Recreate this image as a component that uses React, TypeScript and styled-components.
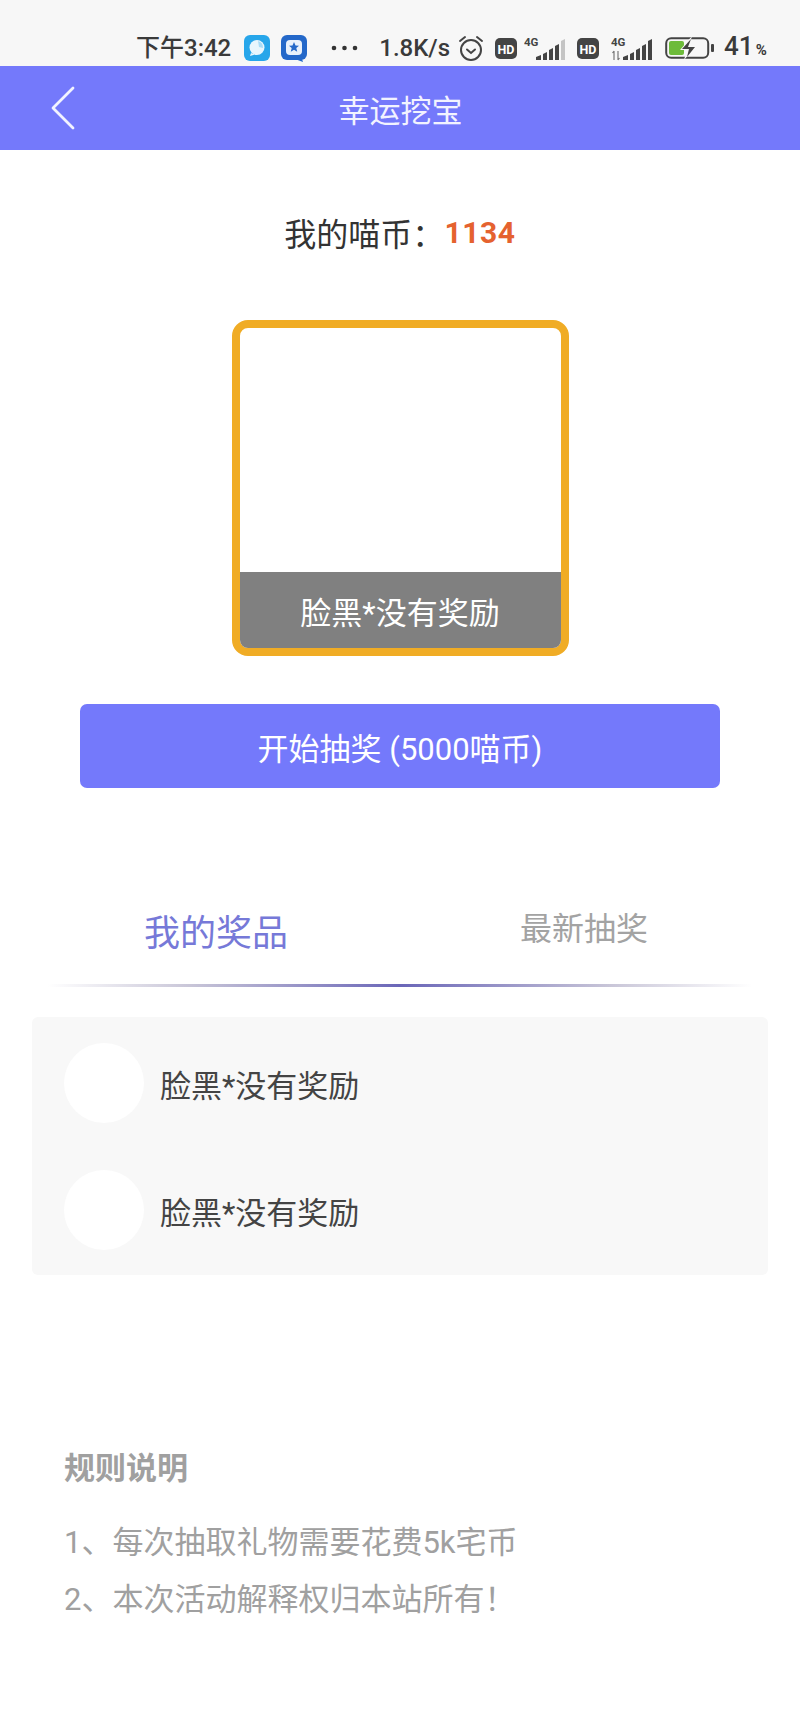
import * as React from 'react'
import styled, { createGlobalStyle } from 'styled-components'

const primary = '#7479fb'

const GlobalStyle = createGlobalStyle`
  html, body {
    margin: 0;
    padding: 0;
    background: #fff;
  }
  body {
    font-family: Roboto, "Noto Sans CJK SC", sans-serif;
  }
  * {
    box-sizing: border-box;
  }
`

const Page = styled.div`
  width: 800px;
  height: 1733px;
  overflow: hidden;
  background: #fff;
`

const StatusBar = styled.div`
  height: 66px;
  padding: 30px 0 0 136px;
  display: flex;
  align-items: center;
  background: #f7f7f7;
  color: #3a3a3a;
`

const StatusText = styled.span<{ $left?: number; $size?: number }>`
  margin-left: ${p => p.$left || 0}px;
  font-size: ${p => p.$size || 24}px;
  font-weight: 500;
  line-height: 30px;
  white-space: nowrap;
`

const Percent = styled.span`
  margin-left: 2px;
  font-size: 15px;
  font-weight: 700;
`

const StatusIcon = styled.svg<{ $left: number }>`
  flex: none;
  margin-left: ${p => p.$left}px;
`

const Header = styled.header`
  height: 84px;
  padding-left: 51px;
  display: grid;
  grid-template-columns: 1fr auto 1fr;
  align-items: center;
  background: ${primary};
`

const BackIcon = styled.svg`
  display: block;
`

const HeaderTitle = styled.h1`
  margin: 0;
  font-size: 31px;
  font-weight: 400;
  color: #f2f3ff;
  transform: translateX(-25px);
`

const Balance = styled.div`
  margin-top: 60px;
  height: 44px;
  display: flex;
  justify-content: center;
  align-items: center;
  font-size: 32px;
  color: #333;
`

const Coins = styled.span`
  font-size: 30px;
  font-weight: 700;
  letter-spacing: 0.6px;
  color: #e5622f;
`

const PrizeBox = styled.div`
  width: 337px;
  height: 336px;
  margin: 66px auto 0;
  display: flex;
  flex-direction: column;
  justify-content: flex-end;
  overflow: hidden;
  border: 8px solid #f0ac25;
  border-radius: 16px;
  background: #fff;
`

const PrizeLabel = styled.div`
  height: 76px;
  display: flex;
  justify-content: center;
  align-items: center;
  font-size: 31px;
  color: #fff;
  background: #808080;
`

const DrawButton = styled.button`
  display: block;
  width: 640px;
  height: 84px;
  margin: 48px auto 0;
  padding: 0;
  border: 0;
  border-radius: 7px;
  font-family: inherit;
  font-size: 31px;
  color: #fff;
  background: ${primary};
`

const Tabs = styled.div`
  margin: 110px 32px 0;
  height: 60px;
  display: grid;
  grid-template-columns: 1fr 1fr;
  align-items: center;
`

const Tab = styled.div<{ $active?: boolean }>`
  text-align: center;
  font-size: ${p => (p.$active ? 36 : 32)}px;
  color: ${p => (p.$active ? '#7679d8' : '#a3a3a3')};
  transform: translateY(${p => (p.$active ? 2 : -2)}px);
`

const Divider = styled.div`
  height: 3px;
  margin: 26px 48px 0 48px;
  background: linear-gradient(90deg, #fff 0%, #c9c6d8 20%, #6a66b8 50%, #c9c6d8 80%, #fff 100%);
`

const PrizeList = styled.ul`
  list-style: none;
  margin: 30px 32px 0;
  padding: 26px 32px 25px;
  height: 258px;
  display: flex;
  flex-direction: column;
  gap: 47px;
  border-radius: 6px;
  background: #f8f8f8;
`

const PrizeRow = styled.li`
  display: flex;
  align-items: center;
  gap: 16px;
  font-size: 31px;
  color: #444;
`

const Thumb = styled.span`
  width: 80px;
  height: 80px;
  border-radius: 50%;
  background: #fff;
`

const Rules = styled.section`
  margin: 172px 64px 0 64px;
  color: #a0a0a0;
`

const RulesTitle = styled.h2`
  margin: 0 0 23px;
  font-size: 31px;
  line-height: 44px;
  font-weight: 700;
`

const RuleLine = styled.p`
  margin: 0;
  font-size: 31px;
  line-height: 57px;
`

const HdBadge: React.FC<{ left: number }> = ({ left }) => (
  <StatusIcon $left={left} width="22" height="22" viewBox="0 0 22 22">
    <rect width="22" height="21" y="1" rx="5" fill="#444" />
    <text x="11" y="16.5" textAnchor="middle" fontSize="12.5" fontWeight="700" fill="#fff" fontFamily="Roboto, sans-serif">
      HD
    </text>
  </StatusIcon>
)

const Signal: React.FC<{ left: number; arrows?: boolean; faded?: boolean }> = ({ left, arrows, faded }) => (
  <StatusIcon $left={left} width="42" height="26" viewBox="0 0 42 26">
    <text x="0" y="11" fontSize="11.5" fontWeight="700" fill="#444" fontFamily="Roboto, sans-serif">
      4G
    </text>
    {arrows && <path d="M3 25v-9M1.5 18l1.5-2M7 16v9M8.5 23l-1.5 2" stroke="#777" strokeWidth="1.2" fill="none" />}
    <path d="M12 25v-3l5-2v5zM19 25v-6l4-2v8zM25 25V15l4-2v12zM31 25V11l4-2v16z" fill="#444" />
    <path d="M37 25V6l4-2v21z" fill={faded ? '#c4c4c4' : '#444'} />
  </StatusIcon>
)

const App: React.FC = () => (
  <Page>
    <GlobalStyle />
    <StatusBar>
      <StatusText>下午3:42</StatusText>
      <StatusIcon $left={13} width="26" height="26" viewBox="0 0 26 26">
        <rect width="26" height="26" rx="6" fill="#27a6ea" />
        <circle cx="13" cy="12.5" r="7.5" fill="#e8f6fd" />
        <path d="M7 18l-1 3 5-1.5z" fill="#e8f6fd" />
        <path d="M14 6a7 7 0 0 1 5 7l-4-1z" fill="#a9dcf6" />
      </StatusIcon>
      <StatusIcon $left={11} width="26" height="27" viewBox="0 0 26 27">
        <rect width="26" height="25" rx="6" fill="#2468c9" />
        <path d="M14 24h7l1 3z" fill="#2468c9" />
        <rect x="5" y="5" width="16" height="15" rx="4" fill="#e9f1fb" />
        <path
          d="M13 7l1.5 3.5 3.5.3-2.7 2.3.9 3.6-3.2-2-3.2 2 .9-3.6L8 10.800l3.500-.3z"
          fill="#2468c9"
        />
      </StatusIcon>
      <StatusIcon $left={24} width="27" height="6" viewBox="0 0 27 6">
        <circle cx="3" cy="3" r="2.300" fill="#333" />
        <circle cx="13.500" cy="3" r="2.300" fill="#333" />
        <circle cx="24" cy="3" r="2.300" fill="#333" />
      </StatusIcon>
      <StatusText $left={21}>1.8K/s</StatusText>
      <StatusIcon $left={8} width="26" height="26" viewBox="0 0 26 26" fill="none" stroke="#444" strokeWidth="2">
        <circle cx="13" cy="15" r="10" />
        <path d="M9 14.500l4 3.500 4-3.500M2 6l5-4M24 6l-5-4" strokeLinecap="round" />
      </StatusIcon>
      <HdBadge left={11} />
      <Signal left={7} faded />
      <HdBadge left={11} />
      <Signal left={12} arrows />
      <StatusIcon $left={12} width="49" height="24" viewBox="0 0 49 24">
        <rect x="1.200" y="2.200" width="42" height="19.600" rx="5" fill="none" stroke="#444" strokeWidth="2" />
        <rect x="4" y="5" width="15" height="14" rx="2" fill="#6dbb3a" />
        <path d="M27 0L15 14h7l-3 10 12-14h-7l3-10z" fill="#f7f7f7" />
        <path d="M26 3L17 13h7l-2 8 8-10h-7z" fill="#444" />
        <rect x="46" y="8" width="3" height="8" rx="1" fill="#444" />
      </StatusIcon>
      <StatusText $left={10} $size={26}>
        41<Percent>%</Percent>
      </StatusText>
    </StatusBar>

    <Header>
      <BackIcon width="24" height="44" viewBox="0 0 24 44" fill="none">
        <path d="M22 2L2 22l20 20" stroke="#f2f3ff" strokeWidth="2.800" strokeLinecap="round" strokeLinejoin="round" />
      </BackIcon>
      <HeaderTitle>幸运挖宝</HeaderTitle>
    </Header>

    <Balance>
      我的喵币：<Coins>1134</Coins>
    </Balance>

    <PrizeBox>
      <PrizeLabel>脸黑*没有奖励</PrizeLabel>
    </PrizeBox>

    <DrawButton>开始抽奖 (5000喵币)</DrawButton>

    <Tabs>
      <Tab $active>我的奖品</Tab>
      <Tab>最新抽奖</Tab>
    </Tabs>
    <Divider />

    <PrizeList>
      {[1, 2].map(id => (
        <PrizeRow key={id}>
          <Thumb />
          脸黑*没有奖励
        </PrizeRow>
      ))}
    </PrizeList>

    <Rules>
      <RulesTitle>规则说明</RulesTitle>
      <RuleLine>1、每次抽取礼物需要花费5k宅币</RuleLine>
      <RuleLine>2、本次活动解释权归本站所有！</RuleLine>
    </Rules>
  </Page>
)

export default App
